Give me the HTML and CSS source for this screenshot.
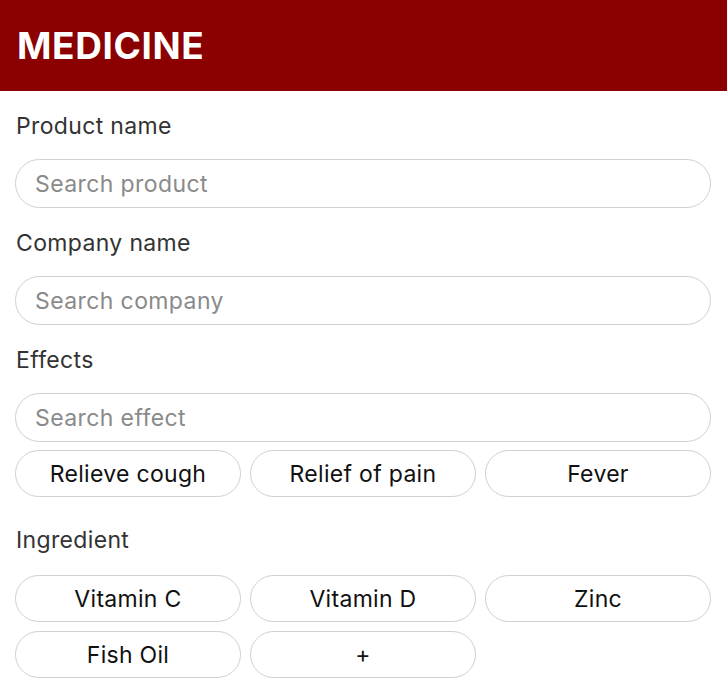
FILE: index.html
```html
<!DOCTYPE html>
<html>
    <head>
        <meta charset="utf-8">
        <title>Medicine</title>
        <link rel="stylesheet" href="styles.css">
    </head>
    <body>
        <div class="header">
            <h1>MEDICINE</h1>
        </div>
        <div class="content">
            <div class="label">Product name</div>
            <input type="text" class="search" placeholder="Search product">

            <div class="label">Company name</div>
            <input type="text" class="search" placeholder="Search company">

            <div class="label">Effects</div>
            <input type="text" class="search" placeholder="Search effect">
            <div class="chips">
                <button class="chip">Relieve cough</button>
                <button class="chip">Relief of pain</button>
                <button class="chip">Fever</button>
            </div>

            <div class="label label-gap">Ingredient</div>
            <div class="chips chips-top">
                <button class="chip">Vitamin C</button>
                <button class="chip">Vitamin D</button>
                <button class="chip">Zinc</button>
                <button class="chip">Fish Oil</button>
                <button class="chip">+</button>
            </div>
        </div>
    </body>
</html>
```

FILE: styles.css
```css
body{
    margin: 0;
    background: #ffffff;
    font-family: Inter, "Noto Sans", sans-serif;
    color: #333333;
}

.header{
    height: 91px;
    background: #8b0000;
    padding-left: 17px;
    display: flex;
    align-items: center;
}

.header h1{
    margin: 0;
    color: #ffffff;
    font-size: 37px;
    font-weight: 700;
    letter-spacing: 0.6px;
}

.content{
    padding: 0 16px 0 15px;
    display: flex;
    flex-direction: column;
}

.label{
    font-size: 23px;
    line-height: 28px;
    letter-spacing: 0.35px;
    margin: 21px 0 19px 1px;
}

.label-gap{
    margin-top: 29px;
    margin-bottom: 21px;
}

.search{
    box-sizing: border-box;
    width: 100%;
    height: 49px;
    border: 1px solid #d0d0d0;
    border-radius: 25px;
    padding: 0 19px;
    font-family: inherit;
    font-size: 23px;
    letter-spacing: 0.4px;
    color: #333333;
    outline: none;
    background: #ffffff;
}

.search::placeholder{
    color: #8a8a8a;
}

.chips{
    display: grid;
    grid-template-columns: repeat(3, 1fr);
    gap: 9px;
    margin-top: 8px;
}

.chips-top{
    margin-top: 0;
}

.chip{
    height: 47px;
    border: 1px solid #d0d0d0;
    border-radius: 24px;
    background: #ffffff;
    font-family: inherit;
    font-size: 23px;
    letter-spacing: 0.3px;
    color: #111111;
    padding: 0;
}
```
